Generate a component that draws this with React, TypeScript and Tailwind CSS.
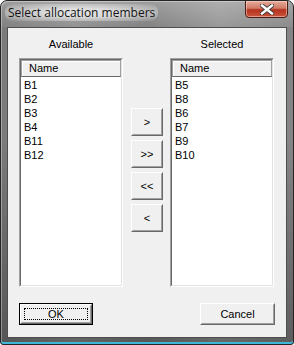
import React from "react"

const font = { fontFamily: '"Liberation Sans", Arial, sans-serif' }

const available = ["B1", "B2", "B3", "B4", "B11", "B12"]
const selected = ["B5", "B8", "B6", "B7", "B9", "B10"]

function ListBox({ items }: { items: string[] }) {
  return (
    <div className="w-[104px] h-[229px] border border-t-[#a0a0a0] border-l-[#a0a0a0] border-b-white border-r-white">
      <div className="w-full h-full bg-white border border-t-[#696969] border-l-[#696969] border-b-[#e3e3e3] border-r-[#e3e3e3]">
        <div className="h-[17px] border border-[#a0a0a0] border-b-[#696969] bg-[#f0f0f0] shadow-[inset_1px_1px_0_#fff] pl-[7px] text-[11px] leading-[15px] text-black">
          Name
        </div>
        <div className="pl-[3px] pt-[1px]">
          {items.map((it) => (
            <div key={it} className="h-[14px] text-[11px] leading-[14px] text-black">
              {it}
            </div>
          ))}
        </div>
      </div>
    </div>
  )
}

function Btn({ label, w, h, def }: { label: string; w: string; h: string; def?: boolean }) {
  return (
    <div className={`${w} ${h} bg-[#f0f0f0] ${def ? "border border-black" : ""}`}>
      <div className="w-full h-full border border-t-white border-l-white border-b-[#696969] border-r-[#696969]">
        <div className="w-full h-full border border-t-[#f0f0f0] border-l-[#f0f0f0] border-b-[#a0a0a0] border-r-[#a0a0a0] flex items-center justify-center p-[2px]">
          <div
            className={
              "w-full h-full flex items-center justify-center text-[11px] text-black " +
              (def ? "border border-dotted border-black" : "")
            }
          >
            {label}
          </div>
        </div>
      </div>
    </div>
  )
}

export default function App() {
  return (
    <div className="w-[294px] h-[345px] bg-white">
      <div className="w-[294px] h-[345px] rounded-t-[7px] rounded-b-[3px] border border-[#262626] bg-[linear-gradient(180deg,rgba(0,0,0,0)_0%,rgba(0,0,0,0)_40%,rgba(0,0,0,0.3)_100%),linear-gradient(90deg,#7a7a7a_0%,#8e8e8e_25%,#7c7c7c_50%,#949494_75%,#858585_100%)] flex flex-col overflow-hidden shadow-[inset_0_-2px_0_#3fb6d8,inset_1px_1px_0_rgba(255,255,255,0.35)]">
        {/* title bar */}
        <div className="h-[26px] flex items-start justify-between relative bg-[linear-gradient(180deg,rgba(255,255,255,0.25)_0%,rgba(255,255,255,0.05)_100%)]">
          <div
            className="ml-[4px] mt-[3px] px-[3px] text-[12px] leading-[17px] text-[#141414] rounded-[8px] bg-[radial-gradient(ellipse_at_center,rgba(235,235,235,0.85)_30%,rgba(220,220,220,0.4)_75%,rgba(220,220,220,0)_100%)]"
            style={{ fontFamily: '"Open Sans", "Noto Sans", sans-serif' }}
          >
            Select allocation members
          </div>
          <div className="mr-[5px] w-[43px] h-[18px] -mt-px rounded-b-[4px] border border-[#4a1e16] bg-[linear-gradient(180deg,#e6ad9c_0%,#d07a66_45%,#b5321e_55%,#c9543c_100%)] shadow-[inset_0_0_0_1px_rgba(255,220,210,0.5)] flex items-center justify-center">
            <svg width="14" height="11" viewBox="0 0 14 11">
              <path d="M2 1.5 L12 9.5 M12 1.5 L2 9.5" stroke="#3a3a3a" strokeWidth="4.2" strokeLinecap="square" />
              <path d="M2 1.5 L12 9.5 M12 1.5 L2 9.5" stroke="#ffffff" strokeWidth="2.4" strokeLinecap="square" />
            </svg>
          </div>
        </div>
        {/* client */}
        <div className="mx-[6px] h-[311px] border border-[#4e4e4e] bg-[#f0f0f0] flex flex-col" style={font}>
          <div className="flex pt-[10px] pl-[11px]">
            <div className="flex flex-col">
              <div className="h-[20px] text-center text-[11px] leading-[13px] text-black">Available</div>
              <ListBox items={available} />
            </div>
            <div className="ml-[8px] mr-[7px] pt-[70px] flex flex-col gap-[4px]">
              <Btn label=">" w="w-[32px]" h="h-[28px]" />
              <Btn label=">>" w="w-[32px]" h="h-[28px]" />
              <Btn label="<<" w="w-[32px]" h="h-[28px]" />
              <Btn label="<" w="w-[32px]" h="h-[28px]" />
            </div>
            <div className="flex flex-col">
              <div className="h-[20px] text-center text-[11px] leading-[13px] text-black">Selected</div>
              <ListBox items={selected} />
            </div>
          </div>
          <div className="flex justify-between pl-[11px] pr-[11px] mt-[16px]">
            <Btn label="OK" w="w-[74px]" h="h-[22px]" def />
            <Btn label="Cancel" w="w-[75px]" h="h-[22px]" />
          </div>
        </div>
      </div>
    </div>
  )
}
